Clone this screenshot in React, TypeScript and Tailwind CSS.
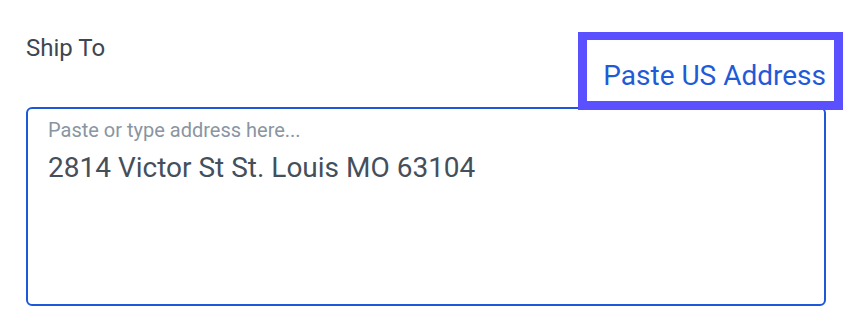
export default function App() {
  return (
    <div className="relative h-[334px] w-[850px] overflow-hidden bg-white font-['Roboto','Liberation_Sans',sans-serif]">
      <div className="px-[26px] pt-[34px]">
        <div className="flex h-[73px] items-start justify-between">
          <span className="text-[24px] leading-[28px] text-[#3e4653]">Ship To</span>
          <a className="mt-[26px] -mr-[2px] text-[28px] leading-[32px] text-[#1f5bd8]">Paste US Address</a>
        </div>
        <div className="h-[199px] w-[800px] rounded-[6px] border-2 border-[#1c58d8] px-[20px] pt-[10px]">
          <div className="text-[20px] leading-[22px] text-[#8a95a2]">Paste or type address here...</div>
          <div className="mt-[10px] text-[28px] leading-[34px] text-[#454f5c]">2814 Victor St St. Louis MO 63104</div>
        </div>
      </div>
      {/* highlight annotation over the link */}
      <div className="pointer-events-none absolute left-[578px] top-[32px] h-[78px] w-[265px] border-[9px] border-t-[8px] border-[#5b50ff]" />
    </div>
  );
}
